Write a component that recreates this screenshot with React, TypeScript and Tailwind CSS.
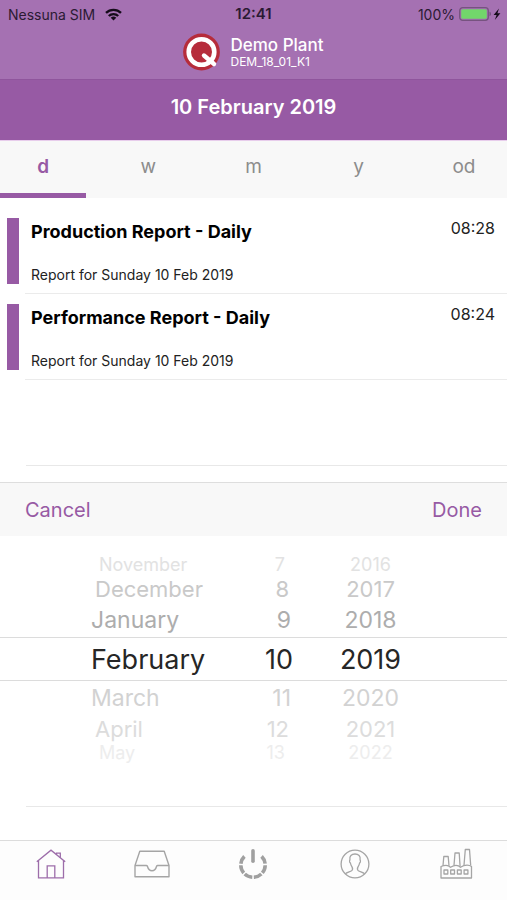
import React from 'react';

const tabs = ['d', 'w', 'm', 'y', 'od'];

const reports = [
  { title: 'Production Report - Daily', subtitle: 'Report for Sunday 10 Feb 2019', time: '08:28' },
  { title: 'Performance Report - Daily', subtitle: 'Report for Sunday 10 Feb 2019', time: '08:24' },
];

// Rows shrink and fade the further they are from the selected one
const wheel = [
  { month: 'November', day: '7', year: '2016', style: 'h-5 text-[18px] text-[#e2e2e2]', inset: 'px-2' },
  { month: 'December', day: '8', year: '2017', style: 'h-7 text-[22px] text-[#c9c9c9]', inset: 'px-1' },
  { month: 'January', day: '9', year: '2018', style: 'h-[34px] text-[23px] text-[#adadad]', inset: 'pr-0.5' },
  { month: 'February', day: '10', year: '2019', style: 'h-11 text-[27px] text-[#262626] border-y border-[#dcdcdc]', inset: '' },
  { month: 'March', day: '11', year: '2020', style: 'h-[34px] text-[23px] text-[#d2d2d2]', inset: 'pr-0.5' },
  { month: 'April', day: '12', year: '2021', style: 'h-7 text-[22px] text-[#dcdcdc]', inset: 'px-1' },
  { month: 'May', day: '13', year: '2022', style: 'h-5 text-[18px] text-[#ededed]', inset: 'px-2' },
];

export default function App() {
  return (
    <div className="min-h-screen flex flex-col bg-white text-black font-['Inter','Liberation_Sans',sans-serif]">
      <header className="bg-[#a571b2]">
        <StatusBar />
        <div className="h-[51px] flex justify-center items-center gap-2.5 pb-1">
          <Logo />
          <div className="text-white">
            <p className="text-[17px] leading-5 font-medium">Demo Plant</p>
            <p className="text-[12px] leading-3.5">DEM_18_01_K1</p>
          </div>
        </div>
      </header>

      <div className="h-[61px] pb-1.5 flex items-center justify-center bg-[#975aa4] border-t border-[#8f559c]">
        <h1 className="text-[20px] font-semibold text-white">10 February 2019</h1>
      </div>

      {/* Period tabs */}
      <nav className="flex justify-between bg-[#f8f8f8] border-t border-[#e8cdec]">
        {tabs.map((tab, i) => (
          <button
            key={tab}
            className={
              i === 0
                ? 'w-[17%] h-[57px] text-[19px] font-semibold text-[#975aa4] border-b-[5px] border-[#975aa4]'
                : 'w-[17%] h-[57px] pb-[5px] text-[19px] text-[#8c8c8c]'
            }
          >
            {tab}
          </button>
        ))}
      </nav>

      <main className="pt-2.5">
        {reports.map((report) => (
          <ReportRow key={report.title} {...report} />
        ))}
        <div className="h-[86px] ml-[26px] border-b border-[#e8e8e8]"></div>
      </main>

      {/* Date picker */}
      <section className="mt-4 flex-1">
        <div className="h-[54px] px-[25px] flex justify-between items-center bg-[#f8f8f8] border-t border-[#dedede] text-[20px] text-[#975aa4]">
          <button>Cancel</button>
          <button>Done</button>
        </div>
        <div className="pt-[19px]">
          {wheel.map((row) => (
            <WheelRow key={row.month} {...row} />
          ))}
        </div>
        <div className="h-[44px] ml-[26px] border-b border-[#e8e8e8]"></div>
      </section>

      <TabBar />
    </div>
  );
}

const StatusBar = () => (
  <div className="h-7 px-2 grid grid-cols-3 items-center text-[14px] text-[#2b1a33]">
    <div className="flex items-center gap-2.5">
      <span>Nessuna SIM</span>
      <svg width="17" height="13" viewBox="0 0 17 13" fill="none" stroke="#150b1a" strokeWidth="2.3">
        <path d="M1 4.9a10.6 10.6 0 0 1 15 0" />
        <path d="M3.8 8a6.6 6.6 0 0 1 9.4 0" />
        <path d="M8.5 12.6 5.7 9.8a4 4 0 0 1 5.6 0z" fill="#150b1a" stroke="none" />
      </svg>
    </div>
    <span className="text-center text-[15px] font-semibold">12:41</span>
    <div className="flex items-center justify-end gap-1">
      <span>100%</span>
      <svg width="42" height="14" viewBox="0 0 42 14" className="-mr-0.5">
        <rect x="0.7" y="0.7" width="28.6" height="12.6" rx="3" fill="none" stroke="#76537f" strokeWidth="1.3" />
        <rect x="2.2" y="2.2" width="25.6" height="9.6" rx="1.6" fill="#72d66b" />
        <path d="M30.5 4.8c2 .6 2 3.8 0 4.4z" fill="#76537f" />
        <path d="M40 1.5 34.6 8h3l-1.8 5L41.4 6.3h-3z" fill="#150b1a" />
      </svg>
    </div>
  </div>
);

const Logo = () => (
  <svg width="37" height="38" viewBox="0 0 37 38" fill="none">
    <circle cx="18.5" cy="19" r="18.4" fill="#b62c3b" />
    <circle cx="18.5" cy="19" r="12.8" stroke="#fff" strokeWidth="4.6" />
    <path d="m21 22.5 10 8.5" stroke="#fff" strokeWidth="4.4" strokeLinecap="round" />
  </svg>
);

const ReportRow = ({ title, subtitle, time }: { title: string; subtitle: string; time: string }) => (
  <article className="flex pl-[7px]">
    <div className="w-[12px] h-[66px] mt-2.5 bg-[#975aa4]"></div>
    <div className="flex-1 h-[86px] ml-1.5 pl-1.5 pr-3 pt-2.5 flex justify-between border-b border-[#ebebeb]">
      <div>
        <h2 className="text-[18px] leading-7 font-bold">{title}</h2>
        <p className="mt-[19px] text-[14px] leading-5 text-[#222]">{subtitle}</p>
      </div>
      <time className="text-[16px] leading-5 text-[#222]">{time}</time>
    </div>
  </article>
);

interface WheelRowProps {
  month: string;
  day: string;
  year: string;
  style: string;
  inset: string;
}

const WheelRow = ({ month, day, year, style, inset }: WheelRowProps) => (
  <div className={`grid grid-cols-[91fr_202fr_45fr_65fr_104fr] items-center leading-none ${style}`}>
    <span></span>
    <div className={`flex justify-between ${inset}`}>
      <button>{month}</button>
      <button>{day}</button>
    </div>
    <span></span>
    <button className="text-center">{year}</button>
    <span></span>
  </div>
);

const TabBar = () => (
  <nav className="h-[60px] pb-3.5 grid grid-cols-5 items-center justify-items-center border-t border-[#dcdcdc] bg-[#fdfdfd] text-[#a5a5a5]">
    <button aria-label="Home" className="text-[#9d6daa]">
      <svg width="30" height="30" viewBox="0 0 30 30" fill="none" stroke="currentColor" strokeWidth="1.3">
        <path d="M.8 12.8 15 1.2l14.2 11.6" />
        <path d="M2.5 11.5v17.3h25V11.5M20.5 5.5V4.2h3.8v4.500M11.2 28.5V16.8h7.6v11.7" />
      </svg>
    </button>
    <button aria-label="Inbox">
      <svg width="36" height="28" viewBox="0 0 36 28" fill="none" stroke="currentColor" strokeWidth="1.4">
        <path d="M1 15.5 5.8 1.2h24.4L35 15.5v11.3H1z" strokeLinejoin="round" />
        <path d="M1 15.5h11.3c.6 0 1 .4 1.2 1 .7 2.7 2.2 4.2 4.5 4.2s3.8-1.500 4.500-4.200c.2-.6.6-1 1.200-1H35" />
      </svg>
    </button>
    <button aria-label="Power" className="text-[#a0a0a0]">
      <svg width="30" height="32" viewBox="0 0 30 32" fill="none" stroke="currentColor" strokeWidth="3.6">
        <path d="M15 2.800v10.400" strokeLinecap="round" />
        <path d="M6.400 8.400a12.200 12.200 0 1 0 17.200 0" strokeDasharray="8.300 1.500" />
      </svg>
    </button>
    <button aria-label="Profile">
      <svg width="30" height="30" viewBox="0 0 30 30" fill="none" stroke="currentColor" strokeWidth="1.3">
        <circle cx="15" cy="15" r="13.9" />
        <path d="M5.3 24.9c1.500-1.700 4.700-2 6.300-3.100 1.200-.9 1.100-2.500.5-3.700-1-1.600-1.500-2.700-1.700-4.100-.8-.5-1.100-2.200-.5-3.200C9.300 7.200 11.500 5 15 5s5.700 2.200 5.100 5.800c.6 1 .3 2.700-.5 3.200-.2 1.400-.7 2.500-1.700 4.100-.6 1.200-.7 2.800.5 3.700 1.600 1.100 4.800 1.400 6.300 3.100" />
      </svg>
    </button>
    <button aria-label="Plant">
      <svg width="34" height="32" viewBox="0 0 34 32" fill="none" stroke="currentColor" strokeWidth="1.3" strokeLinejoin="round">
        <path d="M2 30V18.500c1.500-.7 3-1.200 5-1.200 1.800 0 3.500.8 4.500 2 2-1.300 3.500-2 5.500-2s3.500.8 4.500 2c2-1.400 4-2.200 6.500-2.200 2 0 3.500.5 4.500 1.400V30z" />
        <path d="m4 17.800.8-9.300h4.400l.8 9.300M15 17.300 16 5h4.200l.9 13.500M25 17.300l1.300-15.800h4.200l1.200 16" />
        <path d="M5 22h3.800v4H5zM11.700 22h3.800v4h-3.800zM18.400 22h3.800v4h-3.800zM25.100 22h3.800v4h-3.800z" />
      </svg>
    </button>
  </nav>
);
